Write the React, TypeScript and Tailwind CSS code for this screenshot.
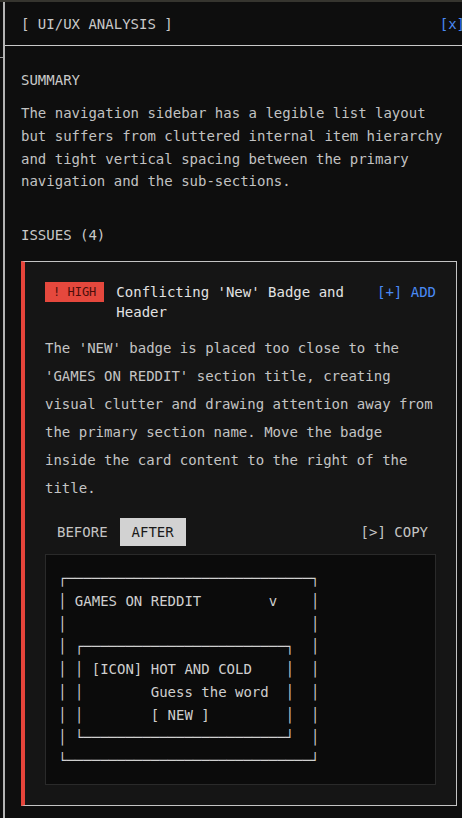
import React from 'react';

const ART = [
  '┌─────────────────────────────┐',
  '│ GAMES ON REDDIT        v    │',
  '│                             │',
  '│ ┌────────────────────────┐  │',
  '│ │ [ICON] HOT AND COLD    │  │',
  '│ │        Guess the word  │  │',
  '│ │        [ NEW ]         │  │',
  '│ └────────────────────────┘  │',
  '└─────────────────────────────┘',
].join('\n');

export default function App() {
  return (
    <div className="flex h-[818px] w-[462px] overflow-hidden border-t-2 border-[#36352f] bg-[#0e0e0e] font-['DejaVu_Sans_Mono',monospace] text-sm text-[#c9c9c9]">
      {/* edge of the page behind the panel */}
      <div className="w-[3px] shrink-0">
        <div className="mt-[55px] h-px bg-[#9a9a9a]" />
      </div>

      <div className="w-[478px] shrink-0 border-l-2 border-[#b4b4b4]">
        <div className="flex h-[44px] items-center justify-between border-b border-[#c8c8c8] px-4">
          <span className="leading-5">[ UI/UX ANALYSIS ]</span>
          <button className="leading-5 text-[#4a8af4]">[x]</button>
        </div>

        <div className="px-4 pt-6">
          <div className="w-[436px]">
            <div className="leading-5">SUMMARY</div>
            <p className="mt-3 leading-relaxed text-[#c2c2c2]">
              The navigation sidebar has a legible list layout but suffers from cluttered internal item hierarchy
              and tight vertical spacing between the primary navigation and the sub-sections.
            </p>

            <div className="mt-8 leading-5">ISSUES (4)</div>

            <div className="mt-4 border border-l-4 border-[#c4c4c4] border-l-[#e5443a] bg-[#151515] p-5">
              <div className="flex items-start gap-3">
                <span className="shrink-0 bg-[#e5483d] px-2 py-0.5 text-xs leading-4 text-[#4a0f0b]">! HIGH</span>
                <h4 className="flex-1 leading-5 text-[#e2e2e2]">Conflicting 'New' Badge and Header</h4>
                <button className="shrink-0 leading-5 text-[#4a8af4]">[+] ADD</button>
              </div>

              <p className="mt-3 leading-7 text-[#c4c4c4]">
                The 'NEW' badge is placed too close to the 'GAMES ON REDDIT' section title, creating visual clutter
                and drawing attention away from the primary section name. Move the badge inside the card content to
                the right of the title.
              </p>

              <div className="mt-4 flex items-center justify-between">
                <div className="flex">
                  <button className="px-3 py-1 leading-5 text-[#c4c4c4]">BEFORE</button>
                  <button className="bg-[#d2d2d2] px-3 py-1 leading-5 text-[#1a1a1a]">AFTER</button>
                </div>
                <button className="px-2 py-1 leading-5 text-[#c4c4c4]">[&gt;] COPY</button>
              </div>

              <div className="mt-2 border border-[#2a2a2a] bg-[#0b0b0b] p-3">
                <div className="whitespace-pre leading-relaxed text-[#cfcfcf]">{ART}</div>
              </div>
            </div>
          </div>
        </div>
      </div>
    </div>
  );
}
